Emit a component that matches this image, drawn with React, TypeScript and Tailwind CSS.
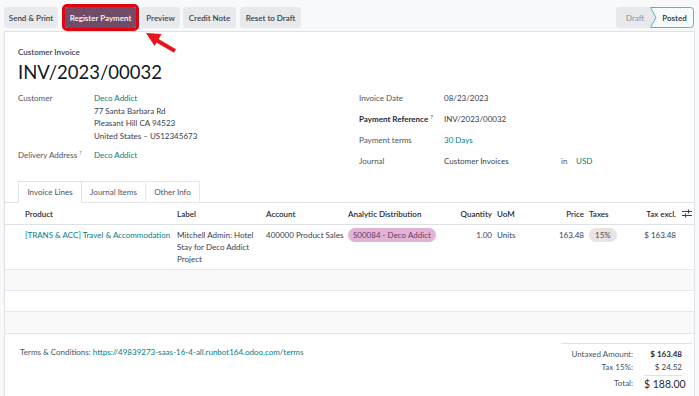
const teal = 'text-[#017e84]';

function SliderIcon() {
  return (
    <svg width="10" height="9" viewBox="0 0 10 9" fill="none" stroke="#374151" strokeWidth="1.1">
      <path d="M0 2.5H10M6.5 0.5V4.5M0 6.5H10M3.5 4.5V8.5" />
    </svg>
  );
}

function Help() {
  return <span className="relative -top-[3px] ml-[2px] text-[6px] text-[#6b7280]">?</span>;
}

export default function App() {
  return (
    <div className="relative h-[396px] w-[699px] overflow-hidden bg-[#f8f9fa] font-['Lato',sans-serif] text-[8px] text-[#374151]">
      {/* Control panel */}
      <div className="flex h-[31px] items-start pl-[4px] pr-[5px] pt-[7px]">
        <button className="h-[21px] w-[54px] rounded-[3px] bg-[#e7e9ed] font-semibold text-[#374151]">Send &amp; Print</button>
        <button className="ml-[7px] h-[21px] w-[71px] rounded-[2px] bg-[#714b67] font-semibold text-white outline-[3px] outline-solid outline-[#e3000f]">
          Register Payment
        </button>
        <button className="ml-[5px] h-[21px] w-[39px] rounded-[3px] bg-[#e7e9ed] font-semibold text-[#374151]">Preview</button>
        <button className="ml-[3px] h-[21px] w-[53px] rounded-[3px] bg-[#e7e9ed] font-semibold text-[#374151]">Credit Note</button>
        <button className="ml-[4px] h-[21px] w-[61px] rounded-[3px] bg-[#e7e9ed] font-semibold text-[#374151]">Reset to Draft</button>

        <div className="ml-auto flex h-[21px]">
          <div className="flex h-full w-[40px] items-center rounded-l-[3px] bg-[#e7e9ed] pl-[10px] text-[#8a8f95]">Draft</div>
          <div className="relative -ml-[6px] flex h-full w-[44px] items-center justify-center pl-[5px] font-semibold text-[#1f2937]">
            <svg className="absolute inset-0" width="44" height="21" viewBox="0 0 44 21">
              <path d="M0.5 0.5H40.5Q43.5 0.5 43.5 3.5V17.5Q43.5 20.5 40.5 20.5H0.5L6 10.5Z" fill="#f6fbfb" stroke="#5fb3b7" />
            </svg>
            <span className="relative">Posted</span>
          </div>
        </div>
      </div>

      {/* Sheet */}
      <div className="mx-[4px] h-[400px] border border-[#dee2e6] bg-white">
        <div className="px-[13px] pt-[14px]">
          <div className="font-semibold leading-[12px] text-[#374151]">Customer Invoice</div>
          <div className="mt-[2px] text-[18.5px] leading-[24px] text-[#111827]">INV/2023/00032</div>

          <div className="mt-[8px] grid grid-cols-[341px_1fr]">
            {/* Left group */}
            <div className="flex flex-col gap-[7px] leading-[12.5px]">
              <div className="flex">
                <div className="w-[76px] text-[#4b5563]">Customer</div>
                <div>
                  <div className={teal}>Deco Addict</div>
                  <div>77 Santa Barbara Rd</div>
                  <div>Pleasant Hill CA 94523</div>
                  <div>United States – US12345673</div>
                </div>
              </div>
              <div className="flex">
                <div className="w-[76px] text-[#4b5563]">
                  Delivery Address<Help />
                </div>
                <div className={teal}>Deco Addict</div>
              </div>
            </div>

            {/* Right group */}
            <div className="flex flex-col gap-[8px] leading-[12.5px]">
              <div className="flex">
                <div className="w-[85px] text-[#4b5563]">Invoice Date</div>
                <div>08/23/2023</div>
              </div>
              <div className="flex">
                <div className="w-[85px] font-bold text-[#1f2937]">
                  Payment Reference<Help />
                </div>
                <div>INV/2023/00032</div>
              </div>
              <div className="flex">
                <div className="w-[85px] text-[#4b5563]">Payment terms</div>
                <div className={teal}>30 Days</div>
              </div>
              <div className="flex">
                <div className="w-[85px] text-[#4b5563]">Journal</div>
                <div className="w-[117px]">Customer Invoices</div>
                <div className="w-[15px] text-[#4b5563]">in</div>
                <div className={teal}>USD</div>
              </div>
            </div>
          </div>
        </div>

        {/* Tabs */}
        <div className="mt-[14px] flex h-[22px] border-b border-[#dee2e6] pl-[13px]">
          <div className="-mb-px flex w-[64px] items-center justify-center border border-b-white border-[#dee2e6] bg-white text-[#495057]">
            Invoice Lines
          </div>
          <div className="-mb-px flex w-[64px] items-center justify-center border border-l-0 border-[#e5e7eb] text-[#4b5563]">
            Journal Items
          </div>
          <div className="-mb-px flex w-[54px] items-center justify-center border border-l-0 border-[#e5e7eb] text-[#4b5563]">
            Other Info
          </div>
        </div>

        {/* Lines table */}
        <div className="grid h-[22px] grid-cols-[20px_152px_89px_82px_92px_52px_48px_44px_46px_46px_18px] items-center border-b border-[#dee2e6] font-semibold text-[#1f2937]">
          <div />
          <div>Product</div>
          <div>Label</div>
          <div>Account</div>
          <div>Analytic Distribution</div>
          <div className="text-right">Quantity</div>
          <div className="pl-[5px]">UoM</div>
          <div className="text-right">Price</div>
          <div className="pl-[5px]">Taxes</div>
          <div className="text-right">Tax excl.</div>
          <div className="flex justify-end pr-[2px]">
            <SliderIcon />
          </div>
        </div>

        <div className="grid h-[45px] grid-cols-[20px_152px_89px_82px_92px_52px_48px_44px_46px_46px_18px] items-start border-b border-[#e5e7eb] pt-[4px] leading-[12px]">
          <div />
          <div className={`whitespace-nowrap ${teal}`}>[TRANS &amp; ACC] Travel &amp; Accommodation</div>
          <div>
            Mitchell Admin: Hotel
            <br />
            Stay for Deco Addict
            <br />
            Project
          </div>
          <div className="whitespace-nowrap">400000 Product Sales</div>
          <div>
            <span className="-mt-[1px] inline-flex h-[14px] items-center rounded-full bg-[#e1b3d7] px-[5px] text-[#6b3b60]">
              S00084 - Deco Addict
            </span>
          </div>
          <div className="text-right">1.00</div>
          <div className="pl-[5px]">Units</div>
          <div className="text-right">163.48</div>
          <div className="pl-[5px]">
            <span className="-mt-[1px] inline-flex h-[14px] items-center rounded-full bg-[#e9e3e3] px-[6px] text-[#4b4b4b]">15%</span>
          </div>
          <div className="text-right">$ 163.48</div>
          <div />
        </div>

        <div className="h-[21px] border-b border-[#e5e7eb] bg-[#f9f9f9]" />
        <div className="h-[21px] border-b border-[#e5e7eb] bg-white" />
        <div className="h-[22px] border-b border-[#e5e7eb] bg-[#f9f9f9]" />

        {/* Footer: terms + totals */}
        <div className="mt-[9px] flex items-start">
          <div className="pl-[15px] pt-[3px] leading-[12px] text-[#4b5563]">
            Terms &amp; Conditions: <span className={teal}>https://49839273-saas-16-4-all.runbot164.odoo.com/terms</span>
          </div>
          <div className="ml-auto mr-[2px] w-[131px] border-t border-[#dee2e6] pr-[10px] pt-[4px]">
            <div className="grid grid-cols-[72px_11px_38px] leading-[13px]">
              <div className="text-right text-[#4b5563]">Untaxed Amount:</div>
              <div />
              <div className="whitespace-nowrap text-right font-bold text-[#1f2937]">$ 163.48</div>
              <div className="text-right text-[#4b5563]">Tax 15%:</div>
              <div />
              <div className="whitespace-nowrap text-right">$ 24.52</div>
              <div className="pt-[1px] text-right leading-[16px] text-[#4b5563]">Total:</div>
              <div />
              <div className="mt-[1px] whitespace-nowrap border-t border-[#dee2e6] text-right text-[10.5px] leading-[16px] text-[#1f2937]">
                $ 188.00
              </div>
            </div>
          </div>
        </div>
      </div>

      {/* Annotation arrow */}
      <svg className="pointer-events-none absolute left-0 top-0" width="699" height="396">
        <line x1="157" y1="40.5" x2="175" y2="51" stroke="#e8141b" strokeWidth="4" />
        <polygon points="146,33 161.6,34.1 154.6,46.1" fill="#e8141b" />
      </svg>
    </div>
  );
}
